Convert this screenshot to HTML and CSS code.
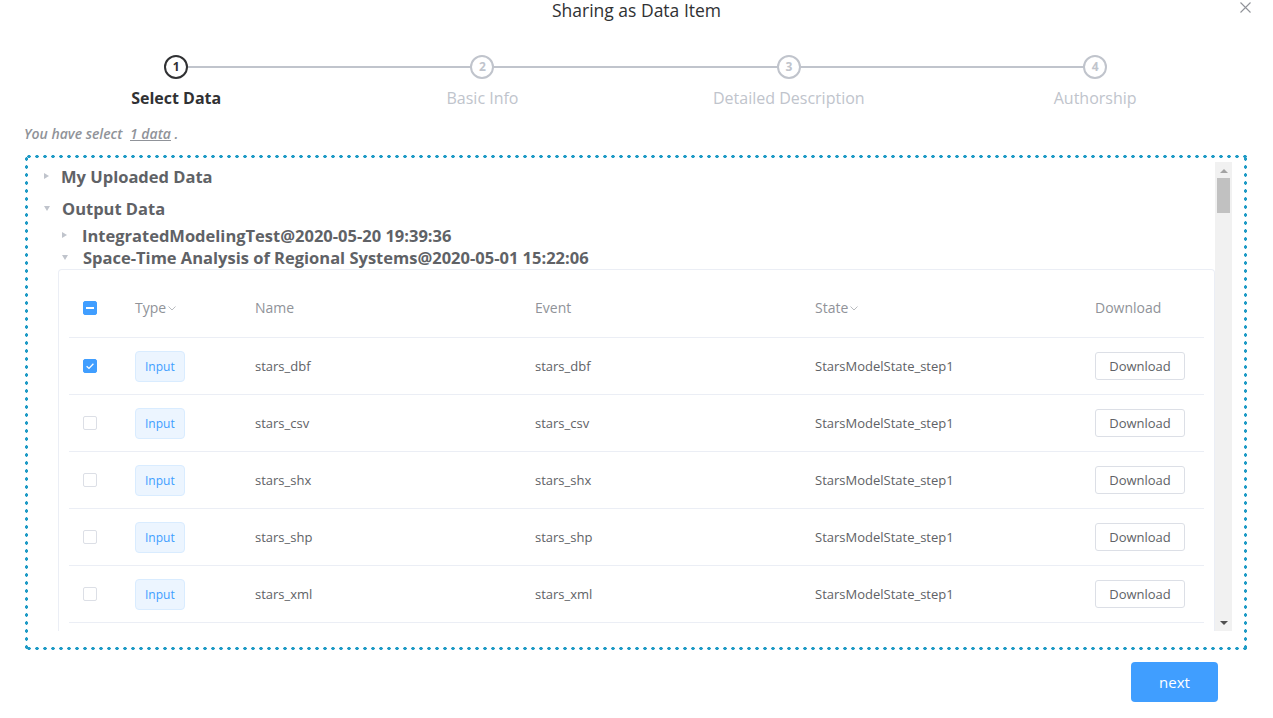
FILE: index.html
```html
<!DOCTYPE html>
<html>
<head>
<meta charset="utf-8">
<link rel="stylesheet" href="styles.css">
</head>
<body>
<div class="dialog">
  <div class="title">Sharing as Data Item</div>
  <div class="close"><svg width="11" height="11" viewBox="0 0 11 11"><path d="M0.5 0.5L10.5 10.5M10.5 0.5L0.5 10.5" stroke="#909399" stroke-width="1.1"/></svg></div>

  <div class="steps">
    <div class="step active">
      <div class="step-head"><div class="step-line"></div><div class="step-icon">1</div></div>
      <div class="step-title">Select Data</div>
    </div>
    <div class="step">
      <div class="step-head"><div class="step-line"></div><div class="step-icon">2</div></div>
      <div class="step-title">Basic Info</div>
    </div>
    <div class="step">
      <div class="step-head"><div class="step-line"></div><div class="step-icon">3</div></div>
      <div class="step-title">Detailed Description</div>
    </div>
    <div class="step last">
      <div class="step-head"><div class="step-icon">4</div></div>
      <div class="step-title">Authorship</div>
    </div>
  </div>

  <div class="selected">You have select <span class="count">1 data</span> .</div>

  <div class="box">
    <div class="scroll">
      <div class="content">
        <div class="node lvl1 r1"><span class="caret right"></span><span class="label">My Uploaded Data</span></div>
        <div class="node lvl1 r2"><span class="caret down"></span><span class="label">Output Data</span></div>
        <div class="node lvl2 r3"><span class="caret right"></span><span class="label">IntegratedModelingTest@2020-05-20 19:39:36</span></div>
        <div class="node lvl2 r4"><span class="caret down"></span><span class="label">Space-Time Analysis of Regional Systems@2020-05-01 15:22:06</span></div>
        <div class="panel">
          <div class="table">
            <div class="row head">
              <div class="c c1"><span class="cb on"><svg width="14" height="14" viewBox="0 0 14 14"><rect x="3" y="6" width="8" height="2" fill="#fff"/></svg></span></div>
              <div class="c c2">Type<svg class="sort" width="8" height="5" viewBox="0 0 8 5"><path d="M0.5 0.5L4 4L7.5 0.5" fill="none" stroke="#b0b3b8" stroke-width="0.9"/></svg></div>
              <div class="c c3">Name</div>
              <div class="c c4">Event</div>
              <div class="c c5">State<svg class="sort" width="8" height="5" viewBox="0 0 8 5"><path d="M0.5 0.5L4 4L7.5 0.5" fill="none" stroke="#b0b3b8" stroke-width="0.9"/></svg></div>
              <div class="c c6">Download</div>
            </div>
            <div class="row">
              <div class="c c1"><span class="cb on"><svg width="14" height="14" viewBox="0 0 14 14"><path d="M3.6 7.2L6 9.4L10.4 4.8" fill="none" stroke="#fff" stroke-width="1.3"/></svg></span></div>
              <div class="c c2"><span class="tag">Input</span></div>
              <div class="c c3">stars_dbf</div>
              <div class="c c4">stars_dbf</div>
              <div class="c c5">StarsModelState_step1</div>
              <div class="c c6"><span class="btn">Download</span></div>
            </div>
            <div class="row">
              <div class="c c1"><span class="cb"></span></div>
              <div class="c c2"><span class="tag">Input</span></div>
              <div class="c c3">stars_csv</div>
              <div class="c c4">stars_csv</div>
              <div class="c c5">StarsModelState_step1</div>
              <div class="c c6"><span class="btn">Download</span></div>
            </div>
            <div class="row">
              <div class="c c1"><span class="cb"></span></div>
              <div class="c c2"><span class="tag">Input</span></div>
              <div class="c c3">stars_shx</div>
              <div class="c c4">stars_shx</div>
              <div class="c c5">StarsModelState_step1</div>
              <div class="c c6"><span class="btn">Download</span></div>
            </div>
            <div class="row">
              <div class="c c1"><span class="cb"></span></div>
              <div class="c c2"><span class="tag">Input</span></div>
              <div class="c c3">stars_shp</div>
              <div class="c c4">stars_shp</div>
              <div class="c c5">StarsModelState_step1</div>
              <div class="c c6"><span class="btn">Download</span></div>
            </div>
            <div class="row">
              <div class="c c1"><span class="cb"></span></div>
              <div class="c c2"><span class="tag">Input</span></div>
              <div class="c c3">stars_xml</div>
              <div class="c c4">stars_xml</div>
              <div class="c c5">StarsModelState_step1</div>
              <div class="c c6"><span class="btn">Download</span></div>
            </div>
          </div>
        </div>
      </div>
      <div class="scrollbar">
        <div class="arrow up"></div>
        <div class="thumb"></div>
        <div class="track"></div>
        <div class="arrow dn"></div>
      </div>
    </div>
  </div>

  <div class="footer"><span class="next">next</span></div>
</div>
</body>
</html>
```

FILE: styles.css
```css
* { box-sizing: border-box; }
html, body { margin: 0; padding: 0; background: #fff; }
body { font-family: "Open Sans", "Liberation Sans", sans-serif; color: #606266; width: 1273px; height: 718px; overflow: hidden; }

.dialog { position: relative; }

.title { height: 20px; line-height: 20px; text-align: center; font-size: 17.5px; color: #303133; }
.close { position: absolute; top: 2px; left: 1240px; width: 11px; height: 11px; }
.close svg { display: block; }

.steps { display: flex; margin-top: 35px; padding-left: 23px; width: 1248px; }
.step { flex: 0 0 306.33px; text-align: center; }
.step-head { position: relative; height: 24px; }
.step-line { position: absolute; top: 11px; left: 50%; right: -50%; height: 2px; background: #c0c4cc; }
.step-icon { position: relative; z-index: 1; margin: 0 auto; width: 24px; height: 24px; border: 2px solid #c0c4cc; border-radius: 50%; background: #fff; color: #c0c4cc; font-size: 12px; font-weight: 700; line-height: 20px; text-align: center; }
.step.active .step-icon { border-color: #303133; color: #303133; }
.step-title { margin-top: 8px; line-height: 22px; font-size: 16px; color: #c0c4cc; }
.step.active .step-title { color: #303133; font-weight: 700; }

.selected { margin-top: 15px; margin-left: 24px; line-height: 20px; font-size: 14px; font-style: italic; font-weight: 600; color: #909399; }
.selected .count { margin-left: 4px; text-decoration: underline; }

.box {
  margin: 11px 0 0 25px; width: 1222px; height: 495px;
  padding: 7px 15px 19px 8px;
  background:
    radial-gradient(circle, #1f9bc6 1.5px, transparent 1.9px) 0 0 / 8px 3px repeat-x,
    radial-gradient(circle, #1f9bc6 1.5px, transparent 1.9px) 0 100% / 8px 3px repeat-x,
    radial-gradient(circle, #1f9bc6 1.5px, transparent 1.9px) 0 0 / 3px 8px repeat-y,
    radial-gradient(circle, #1f9bc6 1.5px, transparent 1.9px) 100% 0 / 3px 8px repeat-y;
}
.scroll { display: flex; height: 469px; overflow: hidden; }
.content { flex: 1; overflow: hidden; }

.node { display: flex; align-items: center; color: #606266; font-weight: 700; font-size: 16.5px; }
.node .caret { width: 0; height: 0; border-style: solid; }
.caret.right { border-width: 3px 0 3px 5px; border-color: transparent transparent transparent #c0c4cc; }
.caret.down { border-width: 5px 3px 0 3px; border-color: #c0c4cc transparent transparent transparent; }
.lvl1 { padding-left: 11px; }
.lvl1 .label { margin-left: 12px; }
.lvl2 { padding-left: 29px; }
.lvl2 .label { margin-left: 15px; }
.r1 { height: 28px; }
.r2 { height: 30px; margin-top: 3px; }
.r3 { height: 22px; margin-top: 1px; }
.r4 { height: 22px; }

.panel { margin: 1px 0 0 25px; border: 1px solid #ebeef5; border-bottom: none; border-radius: 4px 4px 0 0; padding: 0 9px 0 10px; height: 400px; }
.table { width: 1135px; }
.row { display: flex; height: 57px; border-bottom: 1px solid #ebeef5; font-size: 13px; color: #606266; }
.row.head { height: 68px; padding-top: 8px; color: #909399; font-size: 14px; }
.c { display: flex; align-items: center; padding-left: 14px; }
.c1 { width: 52px; }
.c2 { width: 120px; }
.c3 { width: 280px; }
.c4 { width: 280px; }
.c5 { width: 280px; }
.c6 { width: 123px; }
.sort { margin-left: 2px; margin-top: 2px; }

.cb { display: block; width: 14px; height: 14px; border: 1px solid #dcdfe6; border-radius: 2px; background: #fff; }
.cb.on { background: #409eff; border-color: #409eff; }
.cb svg { display: block; margin: -1px; }

.tag { display: inline-block; height: 31px; line-height: 29px; padding: 0 9px; background: #ecf5ff; border: 1px solid #d9ecff; border-radius: 4px; color: #409eff; font-size: 12px; }
.btn { display: inline-block; width: 90px; height: 28px; line-height: 26px; text-align: center; border: 1px solid #dcdfe6; border-radius: 3px; font-size: 13px; color: #606266; background: #fff; }

.scrollbar { width: 17px; flex: 0 0 17px; background: #f1f1f1; display: flex; flex-direction: column; align-items: center; }
.arrow { width: 0; height: 0; border-style: solid; }
.arrow.up { margin-top: 7px; border-width: 0 4px 4px 4px; border-color: transparent transparent #a3a3a3 transparent; }
.thumb { margin-top: 5px; width: 13px; height: 35px; background: #c1c1c1; }
.track { flex: 1; }
.arrow.dn { margin-bottom: 6px; border-width: 4px 4px 0 4px; border-color: #505050 transparent transparent transparent; }

.footer { display: flex; justify-content: flex-end; padding-right: 55px; margin-top: 12px; }
.next { display: inline-block; width: 87px; height: 40px; line-height: 40px; text-align: center; background: #409eff; color: #fff; font-size: 15px; border-radius: 4px; }
```
